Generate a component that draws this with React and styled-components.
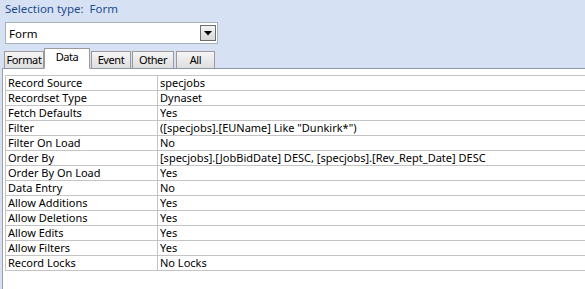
import React, { useState } from 'react';
import styled, { createGlobalStyle } from 'styled-components';

const Global = createGlobalStyle`
  html, body {
    margin: 0;
    background: #d6e2f3;
  }
  body {
    font-family: "Noto Sans", "Liberation Sans", sans-serif;
    font-size: 11px;
    color: #000;
  }
`;

const Page = styled.div`
  width: 585px;
  height: 289px;
  overflow: hidden;
  display: flex;
  flex-direction: column;
  background: #d6e2f3;
`;

const SelectionType = styled.div`
  height: 22px;
  line-height: 18px;
  padding-left: 5px;
  font-size: 11.5px;
  color: #1f4b8c;
  white-space: pre;
`;

const Combo = styled.div`
  margin-left: 5px;
  width: 213px;
  height: 22px;
  box-sizing: border-box;
  border: 1px solid #a9b1bc;
  background: #fff;
  display: flex;
  align-items: center;
  justify-content: space-between;
  padding: 0 1px 0 3px;
  font-size: 11.5px;
`;

const ComboButton = styled.div`
  width: 16px;
  height: 16px;
  box-sizing: border-box;
  border: 1px solid #6d6d6d;
  background: linear-gradient(#f4f4f4, #d8d8d8);
  display: flex;
  align-items: center;
  justify-content: center;
`;

const TabStrip = styled.div`
  display: flex;
  align-items: flex-end;
  height: 20px;
  margin-top: 5px;
  padding-left: 4px;
  margin-bottom: -1px;
  position: relative;
  z-index: 1;
`;

const Tab = styled.div`
  box-sizing: border-box;
  width: ${(p) => p.$w}px;
  margin-right: ${(p) => p.$gap}px;
  height: ${(p) => (p.$active ? 21 : 18)}px;
  border: 1px solid #9a9a9a;
  border-bottom: 1px solid ${(p) => (p.$active ? '#fff' : '#8d97a6')};
  background: ${(p) => (p.$active ? '#fff' : 'linear-gradient(#f5f5f5, #dedede)')};
  display: flex;
  justify-content: center;
  line-height: ${(p) => (p.$active ? 15 : 16)}px;
  font-size: 11px;
  letter-spacing: -0.4px;
  white-space: nowrap;
  cursor: default;
`;

const Panel = styled.div`
  flex: 1;
  width: 620px;
  margin-left: 2px;
  background: #fff;
  border-top: 1px solid #8d97a6;
  border-left: 1px solid #a0a0a0;
  padding: 6px 0 0 2px;
`;

const Grid = styled.table`
  border-collapse: collapse;
  width: 610px;
  table-layout: fixed;
`;

const Cell = styled.td`
  border: 1px solid #c4c4c4;
  height: 14px;
  padding: 0 0 0 2px;
  line-height: 14px;
  white-space: nowrap;
  overflow: hidden;
  width: ${(p) => (p.$label ? '149px' : 'auto')};
`;

const tabs = [
  { name: 'Format', w: 40, gap: 0 },
  { name: 'Data', w: 46, gap: 1 },
  { name: 'Event', w: 40, gap: 1 },
  { name: 'Other', w: 42, gap: 2 },
  { name: 'All', w: 39, gap: 0 },
];

const rows = [
  ['Record Source', 'specjobs'],
  ['Recordset Type', 'Dynaset'],
  ['Fetch Defaults', 'Yes'],
  ['Filter', '([specjobs].[EUName] Like "Dunkirk*")'],
  ['Filter On Load', 'No'],
  ['Order By', '[specjobs].[JobBidDate] DESC, [specjobs].[Rev_Rept_Date] DESC'],
  ['Order By On Load', 'Yes'],
  ['Data Entry', 'No'],
  ['Allow Additions', 'Yes'],
  ['Allow Deletions', 'Yes'],
  ['Allow Edits', 'Yes'],
  ['Allow Filters', 'Yes'],
  ['Record Locks', 'No Locks'],
];

const App = () => {
  const [active, setActive] = useState('Data');
  return (
    <Page>
      <Global />
      <SelectionType>Selection type:  Form</SelectionType>
      <Combo>
        <span>Form</span>
        <ComboButton>
          <svg width="8" height="5" viewBox="0 0 8 5">
            <path d="M0 0H8L4 4.5Z" fill="#000" />
          </svg>
        </ComboButton>
      </Combo>
      <TabStrip>
        {tabs.map((t) => (
          <Tab
            key={t.name}
            $w={t.w}
            $gap={t.gap}
            $active={active === t.name}
            onClick={() => setActive(t.name)}
          >
            {t.name}
          </Tab>
        ))}
      </TabStrip>
      <Panel>
        <Grid>
          <tbody>
            {rows.map(([k, v]) => (
              <tr key={k}>
                <Cell $label>{k}</Cell>
                <Cell>{v}</Cell>
              </tr>
            ))}
          </tbody>
        </Grid>
      </Panel>
    </Page>
  );
};

export default App;
